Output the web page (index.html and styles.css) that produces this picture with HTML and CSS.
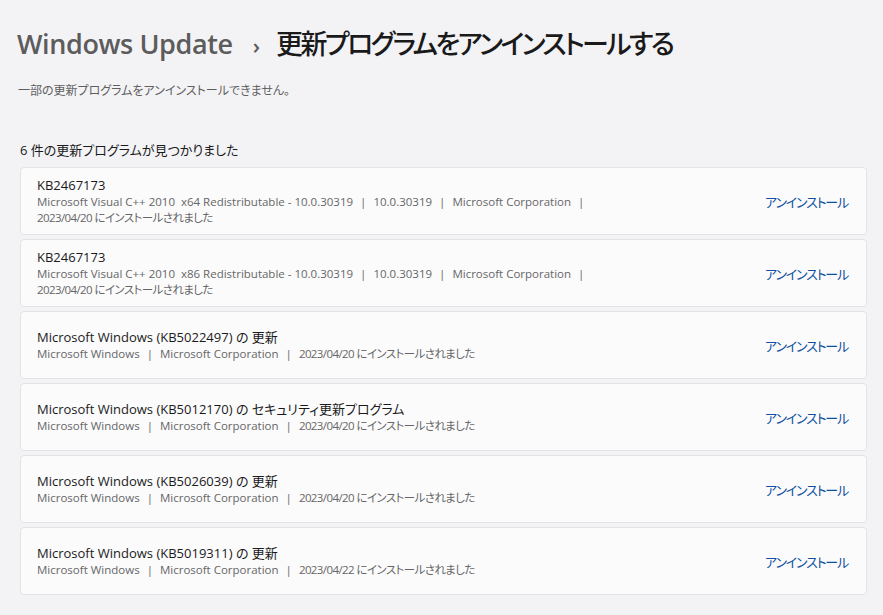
FILE: index.html
```html
<!DOCTYPE html>
<html lang="ja">

<head>
    <meta charset="UTF-8">
    <meta name="viewport" content="width=device-width, initial-scale=1.0">
    <title>更新プログラムをアンインストールする</title>
    <link rel="stylesheet" href="styles.css">
</head>

<body>
    <div class="page">
        <h1 class="breadcrumb">
            <span class="crumb-parent">Windows Update</span>
            <span class="chevron">›</span>
            <span class="crumb-current">更新プログラムをアンインストールする</span>
        </h1>
        <p class="note">一部の更新プログラムをアンインストールできません。</p>

        <h2 class="count">6 件の更新プログラムが見つかりました</h2>

        <ul class="update-list">
            <li class="update-card">
                <div class="info">
                    <p class="name">KB2467173</p>
                    <p class="meta">Microsoft Visual C++ 2010&nbsp; x64 Redistributable - 10.0.30319<span class="sep">|</span>10.0.30319<span class="sep">|</span>Microsoft Corporation<span class="sep">|</span><br><span class="date">2023/04/20 にインストールされました</span></p>
                </div>
                <a class="uninstall" href="#">アンインストール</a>
            </li>
            <li class="update-card">
                <div class="info">
                    <p class="name">KB2467173</p>
                    <p class="meta">Microsoft Visual C++ 2010&nbsp; x86 Redistributable - 10.0.30319<span class="sep">|</span>10.0.30319<span class="sep">|</span>Microsoft Corporation<span class="sep">|</span><br><span class="date">2023/04/20 にインストールされました</span></p>
                </div>
                <a class="uninstall" href="#">アンインストール</a>
            </li>
            <li class="update-card">
                <div class="info">
                    <p class="name">Microsoft Windows (KB5022497) の 更新</p>
                    <p class="meta">Microsoft Windows<span class="sep">|</span>Microsoft Corporation<span class="sep">|</span><span class="date">2023/04/20 にインストールされました</span></p>
                </div>
                <a class="uninstall" href="#">アンインストール</a>
            </li>
            <li class="update-card">
                <div class="info">
                    <p class="name">Microsoft Windows (KB5012170) の セキュリティ更新プログラム</p>
                    <p class="meta">Microsoft Windows<span class="sep">|</span>Microsoft Corporation<span class="sep">|</span><span class="date">2023/04/20 にインストールされました</span></p>
                </div>
                <a class="uninstall" href="#">アンインストール</a>
            </li>
            <li class="update-card">
                <div class="info">
                    <p class="name">Microsoft Windows (KB5026039) の 更新</p>
                    <p class="meta">Microsoft Windows<span class="sep">|</span>Microsoft Corporation<span class="sep">|</span><span class="date">2023/04/20 にインストールされました</span></p>
                </div>
                <a class="uninstall" href="#">アンインストール</a>
            </li>
            <li class="update-card">
                <div class="info">
                    <p class="name">Microsoft Windows (KB5019311) の 更新</p>
                    <p class="meta">Microsoft Windows<span class="sep">|</span>Microsoft Corporation<span class="sep">|</span><span class="date">2023/04/22 にインストールされました</span></p>
                </div>
                <a class="uninstall" href="#">アンインストール</a>
            </li>
        </ul>
    </div>
</body>

</html>
```

FILE: styles.css
```css
body {
    margin: 0;
    background-color: #f3f3f6;
    font-family: "Open Sans", "Noto Sans CJK JP", sans-serif;
    font-feature-settings: "palt";
    color: #1a1a1a;
}

.page {
    padding: 22px 16px 0 20px;
}

.breadcrumb {
    display: flex;
    align-items: baseline;
    margin: 0 0 0 -3px;
    font-size: 27px;
    font-weight: 600;
    line-height: 44px;
}

.crumb-parent {
    color: #5c5c5c;
    letter-spacing: -0.4px;
}

.chevron {
    margin: 0 16px 0 20px;
    font-size: 22px;
    color: #5c5c5c;
}

.crumb-current {
    color: #1a1a1a;
    font-weight: 500;
    letter-spacing: -2.6px;
}

.note {
    margin: 14px 0 0 -2px;
    font-size: 12px;
    color: #5f5f5f;
}

.count {
    margin: 41px 0 8px 0;
    font-size: 13px;
    font-weight: 400;
    color: #1a1a1a;
}

.update-list {
    list-style: none;
    margin: 0;
    padding: 0;
    display: flex;
    flex-direction: column;
    gap: 4px;
}

.update-card {
    display: flex;
    align-items: center;
    height: 66px;
    padding: 0 18px 0 16px;
    background-color: #fbfbfc;
    border: 1px solid #e3e3e6;
    border-radius: 4px;
}

.info {
    flex: 1;
}

.name {
    margin: 0;
    font-size: 13px;
    line-height: 18px;
    color: #1a1a1a;
}

.meta {
    margin: 0;
    font-size: 11.5px;
    line-height: 16px;
    color: #666;
}

.sep {
    margin: 0 7px;
}

.date {
    letter-spacing: -0.6px;
}

.uninstall {
    font-size: 13px;
    letter-spacing: -1.2px;
    color: #0f4f9e;
    text-decoration: none;
}
```
